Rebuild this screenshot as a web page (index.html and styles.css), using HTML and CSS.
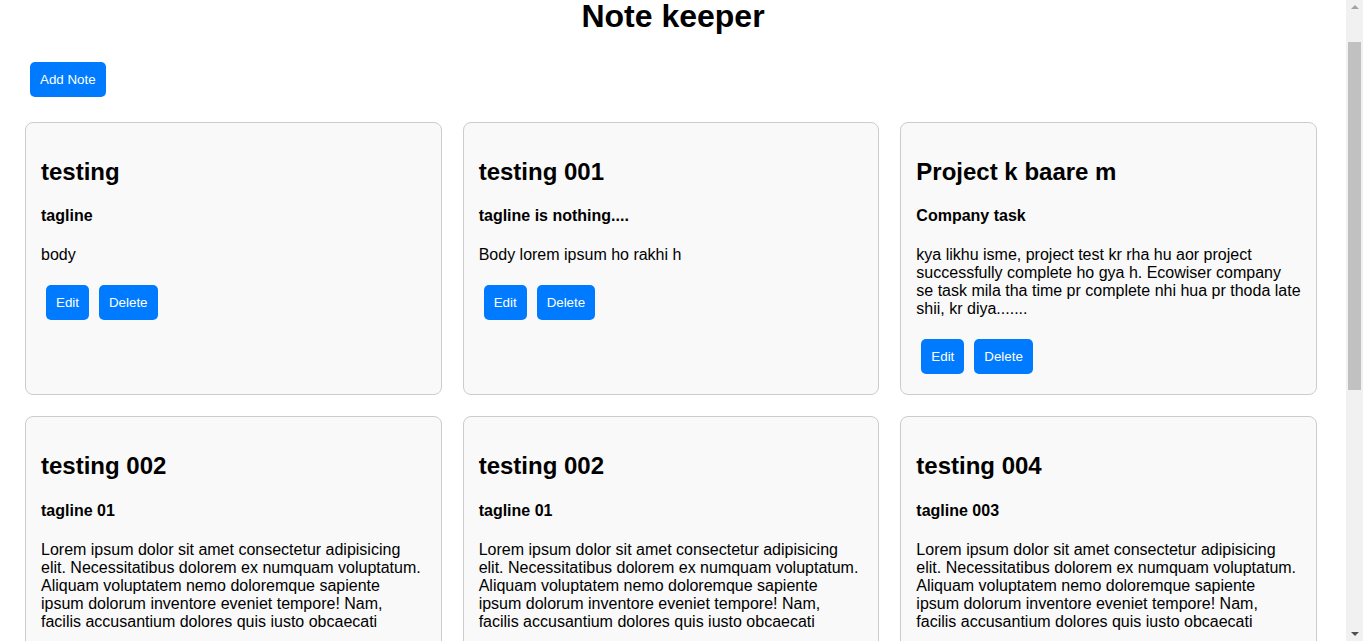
FILE: index.html
```html
<!DOCTYPE html>
<html lang="en">
<head>
<meta charset="utf-8">
<title>Note keeper</title>
<link rel="stylesheet" href="styles.css">
</head>
<body>
<div class="viewport">
  <h1 class="title">Note keeper</h1>
  <main class="page">
    <div class="toolbar">
      <button class="btn">Add Note</button>
    </div>
    <div class="notes">
      <div class="note">
        <h2 class="note-title">testing</h2>
        <h4 class="note-tag">tagline</h4>
        <p class="note-body">body</p>
        <div class="note-actions"><button class="btn">Edit</button><button class="btn">Delete</button></div>
      </div>
      <div class="note">
        <h2 class="note-title">testing 001</h2>
        <h4 class="note-tag">tagline is nothing....</h4>
        <p class="note-body">Body lorem ipsum ho rakhi h</p>
        <div class="note-actions"><button class="btn">Edit</button><button class="btn">Delete</button></div>
      </div>
      <div class="note">
        <h2 class="note-title">Project k baare m</h2>
        <h4 class="note-tag">Company task</h4>
        <p class="note-body">kya likhu isme, project test kr rha hu aor project successfully complete ho gya h. Ecowiser company se task mila tha time pr complete nhi hua pr thoda late shii, kr diya.......</p>
        <div class="note-actions"><button class="btn">Edit</button><button class="btn">Delete</button></div>
      </div>
      <div class="note">
        <h2 class="note-title">testing 002</h2>
        <h4 class="note-tag">tagline 01</h4>
        <p class="note-body">Lorem ipsum dolor sit amet consectetur adipisicing elit. Necessitatibus dolorem ex numquam voluptatum. Aliquam voluptatem nemo doloremque sapiente ipsum dolorum inventore eveniet tempore! Nam, facilis accusantium dolores quis iusto obcaecati</p>
        <div class="note-actions"><button class="btn">Edit</button><button class="btn">Delete</button></div>
      </div>
      <div class="note">
        <h2 class="note-title">testing 002</h2>
        <h4 class="note-tag">tagline 01</h4>
        <p class="note-body">Lorem ipsum dolor sit amet consectetur adipisicing elit. Necessitatibus dolorem ex numquam voluptatum. Aliquam voluptatem nemo doloremque sapiente ipsum dolorum inventore eveniet tempore! Nam, facilis accusantium dolores quis iusto obcaecati</p>
        <div class="note-actions"><button class="btn">Edit</button><button class="btn">Delete</button></div>
      </div>
      <div class="note">
        <h2 class="note-title">testing 004</h2>
        <h4 class="note-tag">tagline 003</h4>
        <p class="note-body">Lorem ipsum dolor sit amet consectetur adipisicing elit. Necessitatibus dolorem ex numquam voluptatum. Aliquam voluptatem nemo doloremque sapiente ipsum dolorum inventore eveniet tempore! Nam, facilis accusantium dolores quis iusto obcaecati</p>
        <div class="note-actions"><button class="btn">Edit</button><button class="btn">Delete</button></div>
      </div>
    </div>
  </main>
</div>
<div class="scrollbar" aria-hidden="true">
  <span class="scroll-arrow scroll-up"></span>
  <span class="scroll-thumb"></span>
  <span class="scroll-arrow scroll-down"></span>
</div>
</body>
</html>
```
FILE: styles.css
```css
html, body {
  margin: 0;
  padding: 0;
  background: #ffffff;
  color: #000000;
  font-family: "Liberation Sans", Arial, sans-serif;
}

.viewport {
  width: 1346px;
}

.title {
  margin: 0;
  font-size: 32px;
  line-height: 32px;
  font-weight: bold;
  text-align: center;
}

.page {
  padding: 25px 29px 20px 25px;
}

.toolbar {
  margin-bottom: 20px;
}

.btn {
  margin: 5px;
  padding: 10px;
  border: none;
  border-radius: 5px;
  background: #007bff;
  color: #ffffff;
  font-family: "Liberation Sans", Arial, sans-serif;
  font-size: 13.333px;
  line-height: normal;
  cursor: pointer;
}

.notes {
  display: grid;
  grid-template-columns: repeat(3, 1fr);
  gap: 21px;
}

.note {
  padding: 15px;
  border: 1px solid #cccccc;
  border-radius: 8px;
  background: #f9f9f9;
}

.note-title {
  margin: 19.92px 0;
  font-size: 24px;
  font-weight: bold;
}

.note-tag {
  margin: 21.28px 0;
  font-size: 16px;
  font-weight: bold;
}

.note-body {
  margin: 16px 0;
  font-size: 16px;
}

.note-actions {
  display: flex;
}

/* classic scrollbar drawn over the right edge */
.scrollbar {
  position: fixed;
  top: 0;
  right: 0;
  bottom: 0;
  width: 17px;
  background: #f1f1f1;
  display: flex;
  flex-direction: column;
  align-items: center;
}

.scroll-arrow {
  display: block;
  width: 0;
  height: 0;
  border-left: 4px solid transparent;
  border-right: 4px solid transparent;
}

.scroll-up {
  margin-top: 5px;
  border-bottom: 4px solid #a3a3a3;
}

.scroll-down {
  margin-top: auto;
  margin-bottom: 5px;
  border-top: 4px solid #505050;
}

.scroll-thumb {
  display: block;
  width: 13px;
  height: 348px;
  margin-top: 33px;
  background: #c1c1c1;
}
```
